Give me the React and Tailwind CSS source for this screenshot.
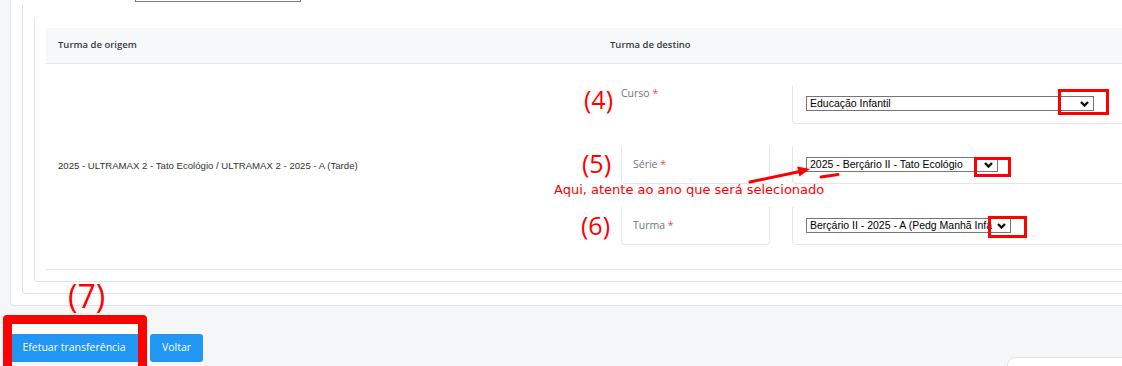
import React from "react";

function Chevron() {
  return (
    <svg width="9" height="6" viewBox="0 0 9 6" className="block">
      <polyline points="1,1 4.5,4.5 8,1" fill="none" stroke="#111" strokeWidth="2.4" />
    </svg>
  );
}

function FakeSelect({ text, className }) {
  return (
    <div className={"relative h-[15px] border border-[#767676] bg-white overflow-hidden " + className}>
      <span className="absolute left-[3px] top-0 whitespace-nowrap text-[10.5px] leading-[13px] text-black font-['Liberation_Sans',Arial,sans-serif]">
        {text}
      </span>
      <span className="absolute right-0 top-0 flex h-full w-[18px] items-center justify-center bg-white">
        <Chevron />
      </span>
    </div>
  );
}

function Label({ children }) {
  return (
    <span className="text-[10.5px] text-[#6c757d]">
      {children} <span className="text-[#e8503a]">*</span>
    </span>
  );
}

export default function App() {
  return (
    <div className="relative h-[366px] w-[1122px] overflow-hidden bg-[#f5f6f8] font-['Open_Sans',sans-serif]">
      {/* outer card */}
      <div className="-mr-[30px] -mt-[30px] ml-[10px] h-[336px] rounded border border-[#dfe2e6] bg-white pb-[11px] pl-[11px]">
        <div className="relative h-[31px]">
          <div className="absolute bottom-0 left-[113px] h-[20px] w-[166px] border border-[#7a7a7a] bg-white" />
        </div>
        {/* second container */}
        <div className="mt-[3px] rounded-b border-x border-b border-[#dfe2e6] pb-[11px] pl-[11px] pt-[12px]">
          {/* third container */}
          <div className="rounded-b border-x border-b border-[#dfe2e6] pb-[11px] pl-[11px] pt-[11px]">
            {/* table */}
            <div>
              <div className="flex h-[36px] items-center border-b border-[#e4e6ea] bg-[#f7f8fa] text-[9.5px] font-semibold text-[#343a40]">
                <div className="w-[552px] pl-[12px]">Turma de origem</div>
                <div className="pl-[12px]">Turma de destino</div>
              </div>
              <div className="flex h-[206px] border-b border-[#e4e6ea]">
                <div className="flex w-[552px] items-center pl-[12px] text-[9.6px] text-[#333] font-['Liberation_Sans',Arial,sans-serif]">
                  2025 - ULTRAMAX 2 - Tato Ecológio / ULTRAMAX 2 - 2025 - A (Tarde)
                </div>
                <div className="flex-1 pl-[23px] pt-[22px]">
                  {/* Curso */}
                  <div className="flex h-[38px] gap-[22px]">
                    <div className="-mt-[2px] w-[149px] leading-[14px]">
                      <Label>Curso</Label>
                    </div>
                    <div className="flex flex-1 items-center rounded-b border-x border-b border-[#e4e6ea] pb-[2px] pl-[13px]">
                      <FakeSelect text="Educação Infantil" className="w-[288px]" />
                    </div>
                  </div>
                  {/* Série */}
                  <div className="mt-[22px] flex h-[38px] gap-[22px]">
                    <div className="flex w-[149px] items-center rounded-b border-x border-b border-[#e4e6ea] px-[11px]">
                      <Label>Série</Label>
                    </div>
                    <div className="flex flex-1 items-center rounded-b border-x border-b border-[#e4e6ea] pl-[13px]">
                      <FakeSelect text="2025 - Berçário II - Tato Ecológio" className="w-[192px]" />
                    </div>
                  </div>
                  {/* Turma */}
                  <div className="mt-[23px] flex h-[38px] gap-[22px]">
                    <div className="flex w-[149px] items-center rounded-b border-x border-b border-[#e4e6ea] px-[11px]">
                      <Label>Turma</Label>
                    </div>
                    <div className="flex flex-1 items-center rounded-b border-x border-b border-[#e4e6ea] pl-[13px]">
                      <FakeSelect text="Berçário II - 2025 - A (Pedg Manhã Infantil)" className="w-[205px]" />
                    </div>
                  </div>
                </div>
              </div>
            </div>
          </div>
        </div>
      </div>

      {/* buttons */}
      <div className="mt-[28px] flex gap-[10px] pl-[8px]">
        <button className="h-[28px] w-[132px] rounded-[3px] bg-[#2196f3] text-[10.5px] text-white">
          Efetuar transferência
        </button>
        <button className="h-[28px] rounded-[3px] bg-[#2196f3] px-[12px] text-[10.5px] text-white">
          Voltar
        </button>
      </div>

      {/* bottom right floating widget */}
      <div className="absolute left-[1007px] top-[357px] h-[20px] w-[130px] rounded-tl-[8px] border border-[#e2e2e2] bg-white" />

      {/* annotations */}
      <div className="absolute left-[584px] top-[84px] text-[25px] font-normal leading-[30px] text-[#ff0000]">(4)</div>
      <div className="absolute left-[582px] top-[148px] text-[25px] font-normal leading-[30px] text-[#ff0000]">(5)</div>
      <div className="absolute left-[581px] top-[210px] text-[25px] font-normal leading-[30px] text-[#ff0000]">(6)</div>
      <div className="absolute left-[68px] top-[277px] text-[32px] font-normal leading-[38px] text-[#ff0000]">(7)</div>

      <div className="absolute left-[554px] top-[182px] whitespace-nowrap text-[13px] leading-[16px] text-[#ff0000] font-['DejaVu_Sans',sans-serif]">
        Aqui, atente ao ano que será selecionado
      </div>

      <svg className="absolute left-[740px] top-[160px]" width="110" height="30" viewBox="0 0 110 30">
        <line x1="10" y1="22" x2="60" y2="11.5" stroke="#ff0000" strokeWidth="3" strokeLinecap="round" />
        <polygon points="70,9 57.2,6.6 59.4,16.4" fill="#ff0000" />
        <line x1="81" y1="17" x2="98" y2="14.5" stroke="#ff0000" strokeWidth="3" strokeLinecap="round" />
      </svg>

      <div className="absolute left-[1058px] top-[89px] h-[26px] w-[51px] border-[3px] border-[#ff0000]" />
      <div className="absolute left-[974px] top-[157px] h-[20px] w-[37px] border-[3px] border-[#ff0000]" />
      <div className="absolute left-[988px] top-[216px] h-[22px] w-[39px] border-[3px] border-[#ff0000]" />

      <div className="absolute left-[3px] top-[315px] h-[60px] w-[144px] rounded-[4px] border-[9px] border-[#ff0000]">
        <div className="h-[10px] bg-white" />
      </div>
    </div>
  );
}
